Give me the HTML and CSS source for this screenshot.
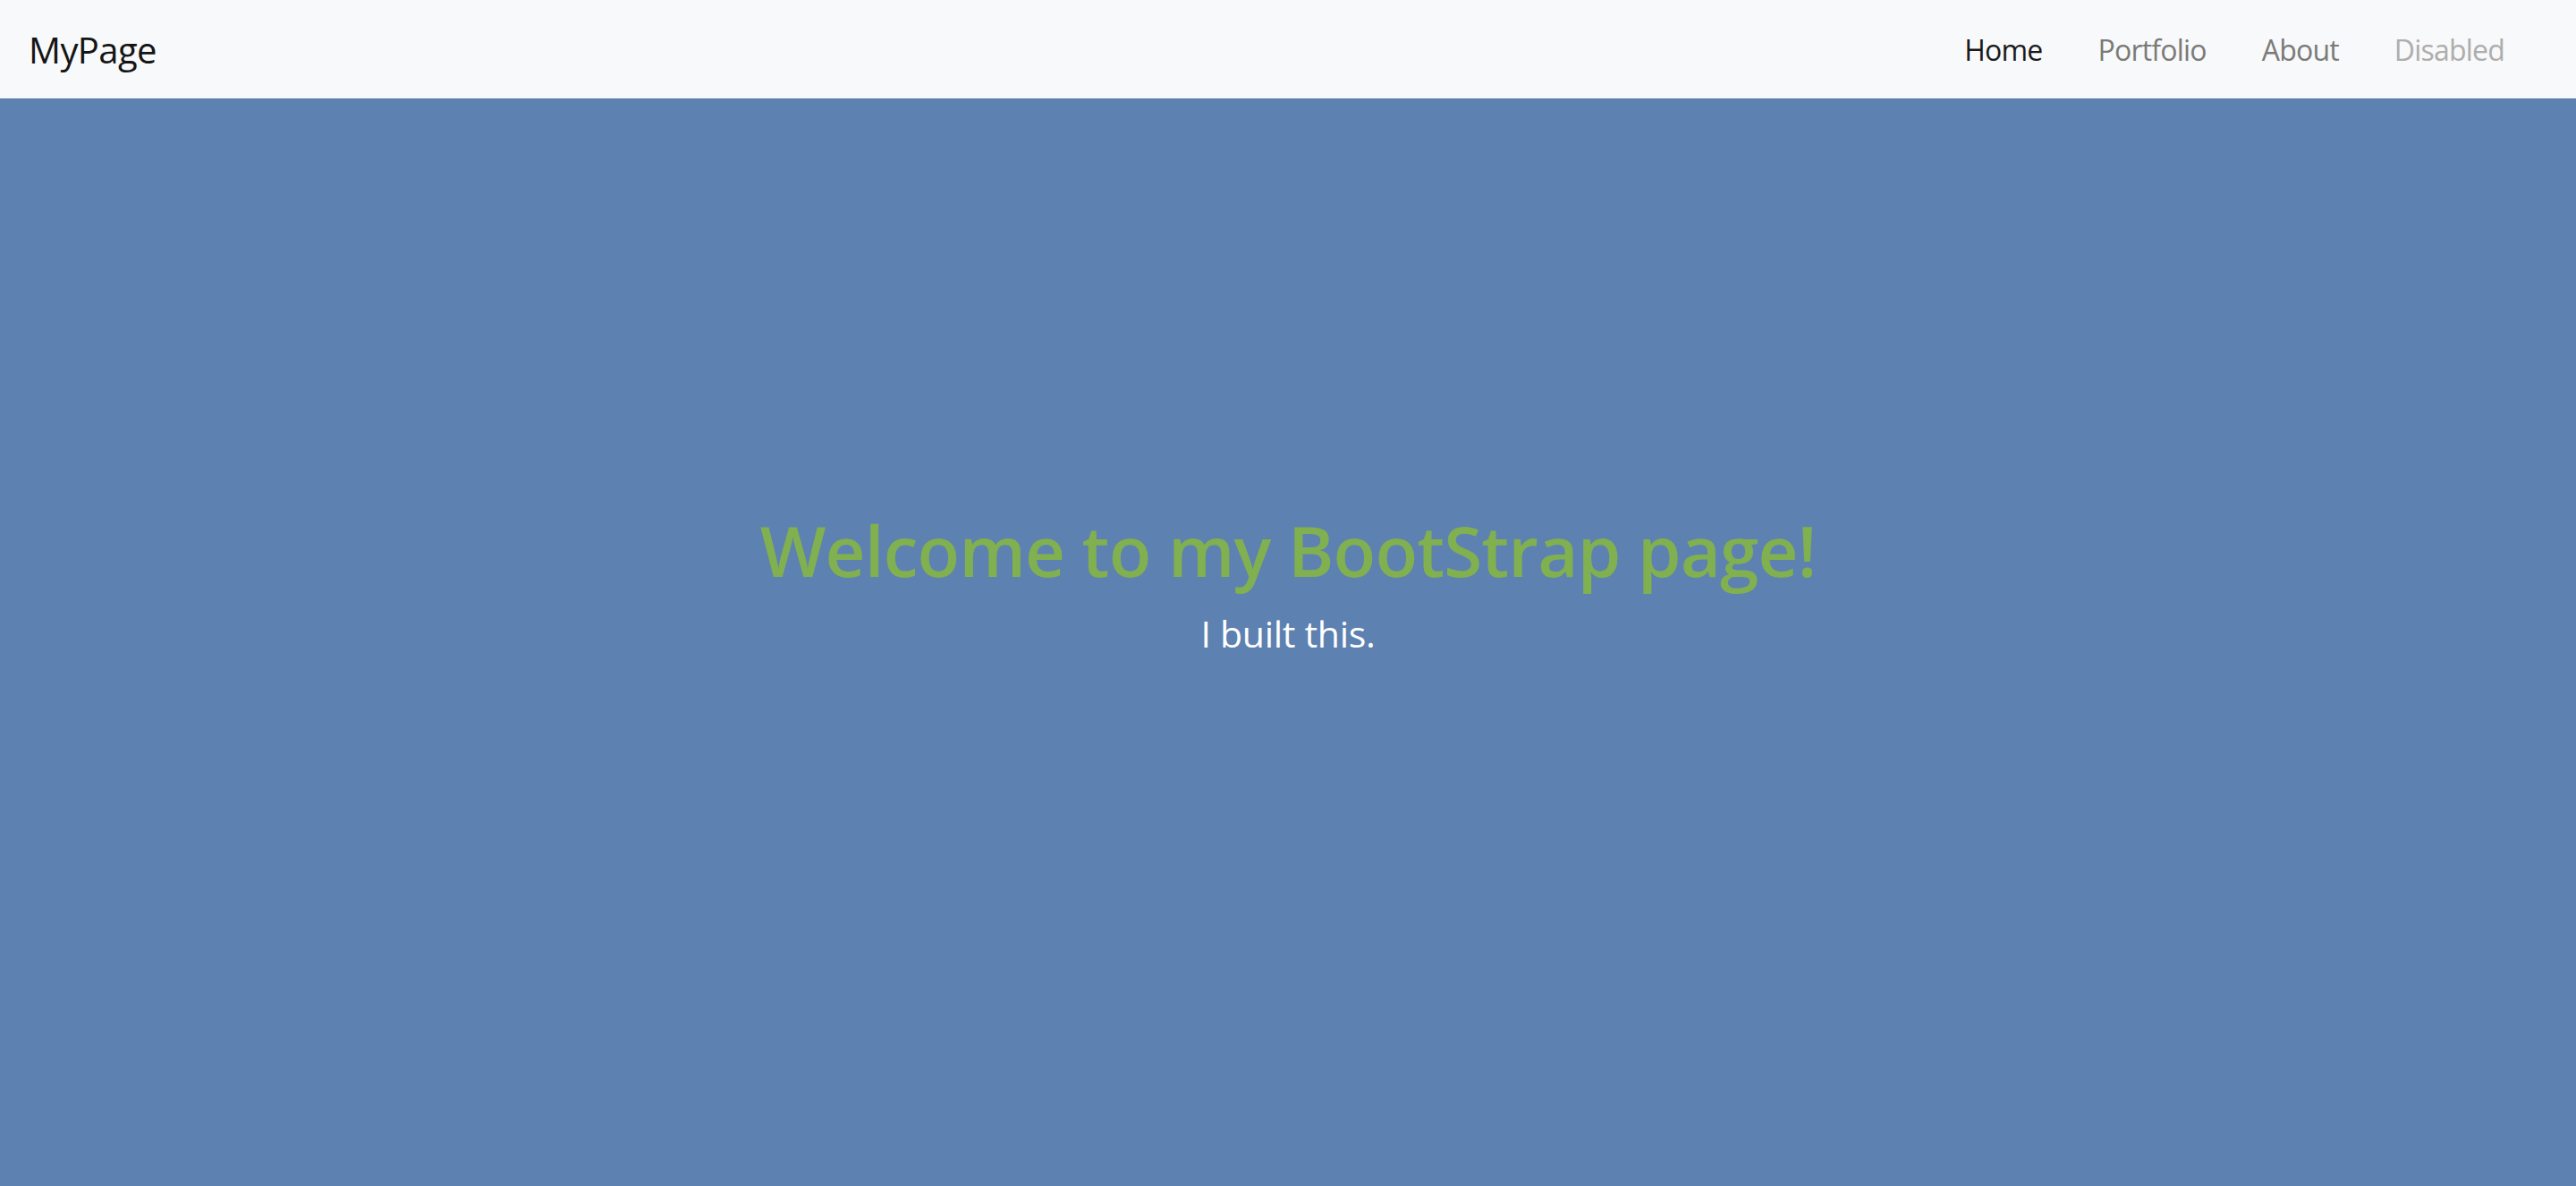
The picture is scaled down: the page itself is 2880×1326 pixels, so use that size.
FILE: index.html
```html
<!DOCTYPE html>
<html lang="en">
<head>
<meta charset="utf-8">
<title>MyPage</title>
<link rel="stylesheet" href="styles.css">
</head>
<body>
<nav class="navbar">
  <a class="brand" href="#">MyPage</a>
  <ul class="nav">
    <li><a class="nav-link active" href="#">Home</a></li>
    <li><a class="nav-link" href="#">Portfolio</a></li>
    <li><a class="nav-link" href="#">About</a></li>
    <li><a class="nav-link disabled" href="#">Disabled</a></li>
  </ul>
</nav>
<main class="hero">
  <h1 class="hero-title">Welcome to my BootStrap page!</h1>
  <p class="hero-lead">I built this.</p>
</main>
</body>
</html>
```
FILE: styles.css
```css
* { box-sizing: border-box; }
html, body { margin: 0; padding: 0; height: 100%; }
body {
  font-family: "Open Sans", "Noto Sans", sans-serif;
  display: flex;
  flex-direction: column;
  background: #5d81b0;
}
.navbar {
  height: 110px;
  flex: 0 0 110px;
  background: #f8f9fa;
  display: flex;
  align-items: center;
  justify-content: space-between;
  padding: 0 49px 0 32px;
}
.brand {
  font-size: 40px;
  color: #151515;
  text-decoration: none;
  letter-spacing: -0.6px;
}
.nav {
  list-style: none;
  margin: 0;
  padding: 0;
  display: flex;
}
.nav-link {
  display: block;
  padding: 0 31px;
  font-size: 32px;
  color: #7b7a78;
  text-decoration: none;
  letter-spacing: -0.8px;
}
.nav-link.active { color: #191919; }
.nav-link.disabled { color: #adadad; }
.hero {
  flex: 1;
  display: flex;
  flex-direction: column;
  align-items: center;
  justify-content: center;
  text-align: center;
  padding-bottom: 128px;
}
.hero-title {
  margin: 0;
  font-size: 78px;
  font-weight: 600;
  line-height: 1.2;
  letter-spacing: -0.8px;
  color: #80b050;
}
.hero-lead {
  margin: 15px 0 0;
  font-size: 41px;
  line-height: 1.5;
  letter-spacing: -0.3px;
  color: #ffffff;
}
```
